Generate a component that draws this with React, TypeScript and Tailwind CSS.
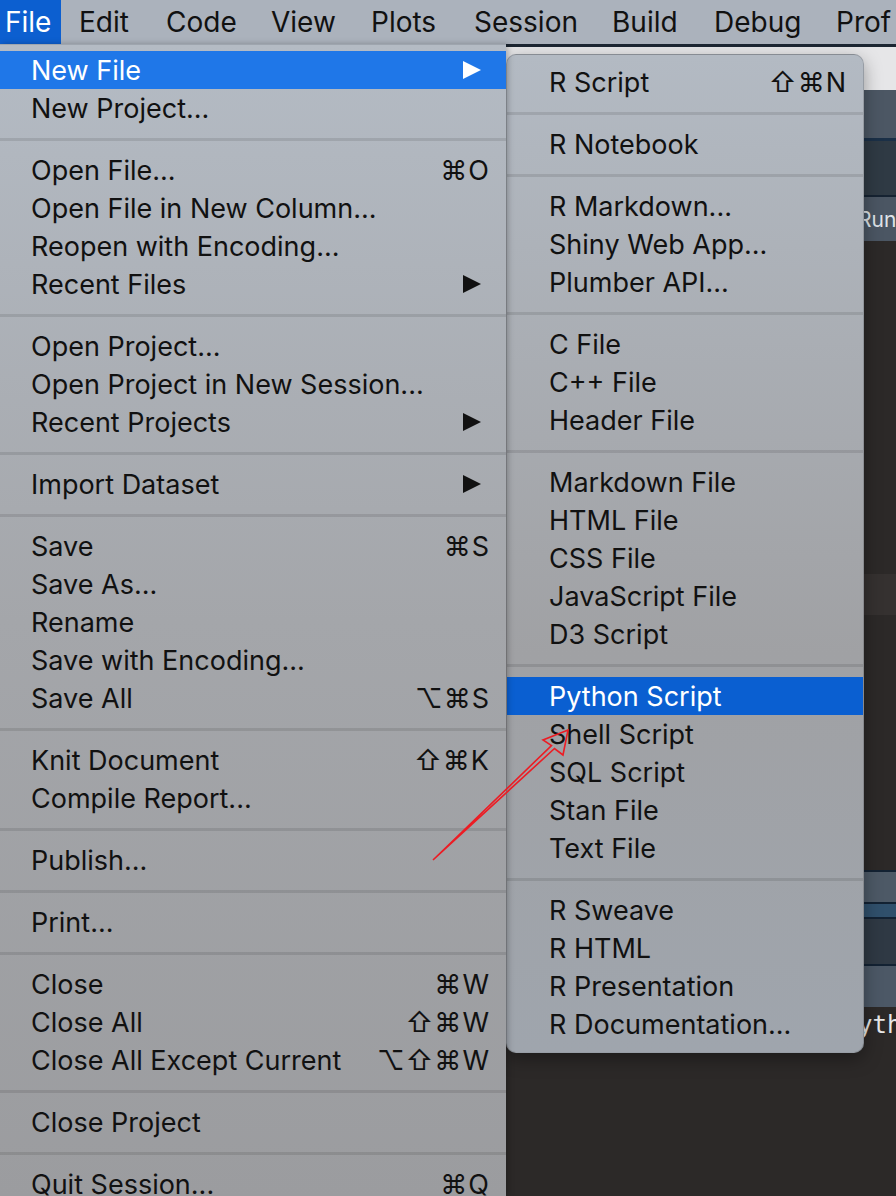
import React from 'react'

type Row =
  | { label: string; shortcut?: string; sub?: boolean; active?: boolean }
  | 'sep'

const fileMenu: Row[] = [
  { label: 'New File', sub: true, active: true },
  { label: 'New Project...' },
  'sep',
  { label: 'Open File...', shortcut: '⌘O' },
  { label: 'Open File in New Column...' },
  { label: 'Reopen with Encoding...' },
  { label: 'Recent Files', sub: true },
  'sep',
  { label: 'Open Project...' },
  { label: 'Open Project in New Session...' },
  { label: 'Recent Projects', sub: true },
  'sep',
  { label: 'Import Dataset', sub: true },
  'sep',
  { label: 'Save', shortcut: '⌘S' },
  { label: 'Save As...' },
  { label: 'Rename' },
  { label: 'Save with Encoding...' },
  { label: 'Save All', shortcut: '⌥⌘S' },
  'sep',
  { label: 'Knit Document', shortcut: '⇧⌘K' },
  { label: 'Compile Report...' },
  'sep',
  { label: 'Publish...' },
  'sep',
  { label: 'Print...' },
  'sep',
  { label: 'Close', shortcut: '⌘W' },
  { label: 'Close All', shortcut: '⇧⌘W' },
  { label: 'Close All Except Current', shortcut: '⌥⇧⌘W' },
  'sep',
  { label: 'Close Project' },
  'sep',
  { label: 'Quit Session...', shortcut: '⌘Q' },
]

const newFileMenu: Row[] = [
  { label: 'R Script', shortcut: '⇧⌘N' },
  'sep',
  { label: 'R Notebook' },
  'sep',
  { label: 'R Markdown...' },
  { label: 'Shiny Web App...' },
  { label: 'Plumber API...' },
  'sep',
  { label: 'C File' },
  { label: 'C++ File' },
  { label: 'Header File' },
  'sep',
  { label: 'Markdown File' },
  { label: 'HTML File' },
  { label: 'CSS File' },
  { label: 'JavaScript File' },
  { label: 'D3 Script' },
  'sep',
  { label: 'Python Script', active: true },
  { label: 'Shell Script' },
  { label: 'SQL Script' },
  { label: 'Stan File' },
  { label: 'Text File' },
  'sep',
  { label: 'R Sweave' },
  { label: 'R HTML' },
  { label: 'R Presentation' },
  { label: 'R Documentation...' },
]

function Triangle({ white }: { white?: boolean }) {
  return (
    <svg width="18" height="18" viewBox="0 0 18 18" className="mr-[9px]">
      <polygon points="0,0 18,9 0,18" fill={white ? '#ffffff' : '#111111'} />
    </svg>
  )
}

function MenuRows({
  rows,
  padLeft,
  activeBg,
}: {
  rows: Row[]
  padLeft: string
  activeBg: string
}) {
  return (
    <>
      {rows.map((row, i) =>
        row === 'sep' ? (
          <div key={i} className="h-[24px] flex items-center">
            <div className="h-[3px] w-full bg-[#0000001a]" />
          </div>
        ) : (
          <div
            key={i}
            className={`h-[38px] flex items-center justify-between ${padLeft} pr-[16px] ${
              row.active ? `${activeBg} text-white` : 'text-[#111111]'
            }`}
          >
            <span>{row.label}</span>
            {row.shortcut && (
              <span className="tracking-[1px]">{row.shortcut}</span>
            )}
            {row.sub && <Triangle white={row.active} />}
          </div>
        ),
      )}
    </>
  )
}

export default function App() {
  const bar = ['Edit', 'Code', 'View', 'Plots', 'Session', 'Build', 'Debug', 'Prof']
  const barWidths = ['w-[87px]', 'w-[105px]', 'w-[100px]', 'w-[103px]', 'w-[138px]', 'w-[102px]', 'w-[122px]', 'w-[60px]']

  return (
    <div
      className="relative w-[896px] h-[1196px] overflow-hidden bg-[#2c2928] text-[27px] leading-none"
      style={{ fontFamily: 'Inter, "DejaVu Sans", sans-serif' }}
    >
      {/* menu bar */}
      <div className="h-[44px] flex items-stretch bg-[#abb2bc] text-[#111111] text-[28px] whitespace-nowrap">
        <div className="w-[70px] mr-[18px] bg-[#0c5fd0] text-white flex items-center pl-[5px]">
          File
        </div>
        {bar.map((b, i) => (
          <div key={b} className={`${barWidths[i]} shrink-0 flex items-center`}>
            {b}
          </div>
        ))}
      </div>

      <div className="flex h-[1152px]">
        {/* file menu */}
        <div className="w-[506px] shrink-0 pt-[6px] border-t border-[#9ea5ae] bg-linear-to-b from-[#b4bbc4] via-[#a4a6aa] to-[#9b9c9f] shadow-[2px_0_6px_rgba(0,0,0,0.25)] z-10 whitespace-nowrap">
          <MenuRows rows={fileMenu} padLeft="pl-[31px]" activeBg="bg-[#1f77e8]" />
        </div>

        {/* window behind */}
        <div className="relative flex-1 flex flex-col">
          <div className="h-[3px] bg-[#1c2632]" />
          <div className="h-[43px] bg-[#e6e6e8]" />
          <div className="h-[48px] bg-[#4c5764]" />
          <div className="h-[3px] bg-[#1b3047]" />
          <div className="h-[54px] bg-[#2f3a44]" />
          <div className="h-[2px] bg-[#162332]" />
          <div className="h-[44px] bg-[#4b5663] flex items-center pl-[352px] text-[21px] text-[#dfe3e8]">
            Run
          </div>
          <div className="h-[333px] bg-[#2c2928]" />
          <div className="h-[41px] bg-[#353130]" />
          <div className="h-[255px] bg-[#2c2928]" />
          <div className="h-[2px] bg-[#132233]" />
          <div className="h-[30px] bg-[#4d5966]" />
          <div className="h-[2px] bg-[#132233]" />
          <div className="h-[13px] bg-[#30506c]" />
          <div className="h-[2px] bg-[#132233]" />
          <div className="h-[45px] bg-[#2f3944]" />
          <div className="h-[2px] bg-[#132233]" />
          <div className="h-[41px] bg-[#4c5866]" />
          <div
            className="flex-1 bg-[#2c2928] pl-[352px] pt-[6px] text-[24px] text-[#e8e8e8]"
            style={{ fontFamily: '"DejaVu Sans Mono", monospace' }}
          >
            ython
          </div>

          {/* New File submenu */}
          <div className="absolute left-0 top-[10px] w-[358px] pt-[8px] pb-[9px] rounded-[10px] bg-linear-to-b from-[#b3bac3] via-[#a0a1a4] via-60% to-[#9fa5ad] shadow-[0_6px_18px_rgba(0,0,0,0.35)] border border-[#00000026] overflow-hidden whitespace-nowrap">
            <MenuRows rows={newFileMenu} padLeft="pl-[42px]" activeBg="bg-[#0a5fd1]" />
          </div>
        </div>
      </div>

      {/* red annotation arrow */}
      <svg
        className="absolute left-0 top-0 z-20 pointer-events-none"
        width="896"
        height="1196"
        viewBox="0 0 896 1196"
      >
        <polygon
          points="433,860 551.5,745.5 543,740 568,730 563,755 554.5,748.5"
          fill="none"
          stroke="#ec1c24"
          strokeWidth="1.6"
          strokeLinejoin="miter"
        />
      </svg>
    </div>
  )
}
